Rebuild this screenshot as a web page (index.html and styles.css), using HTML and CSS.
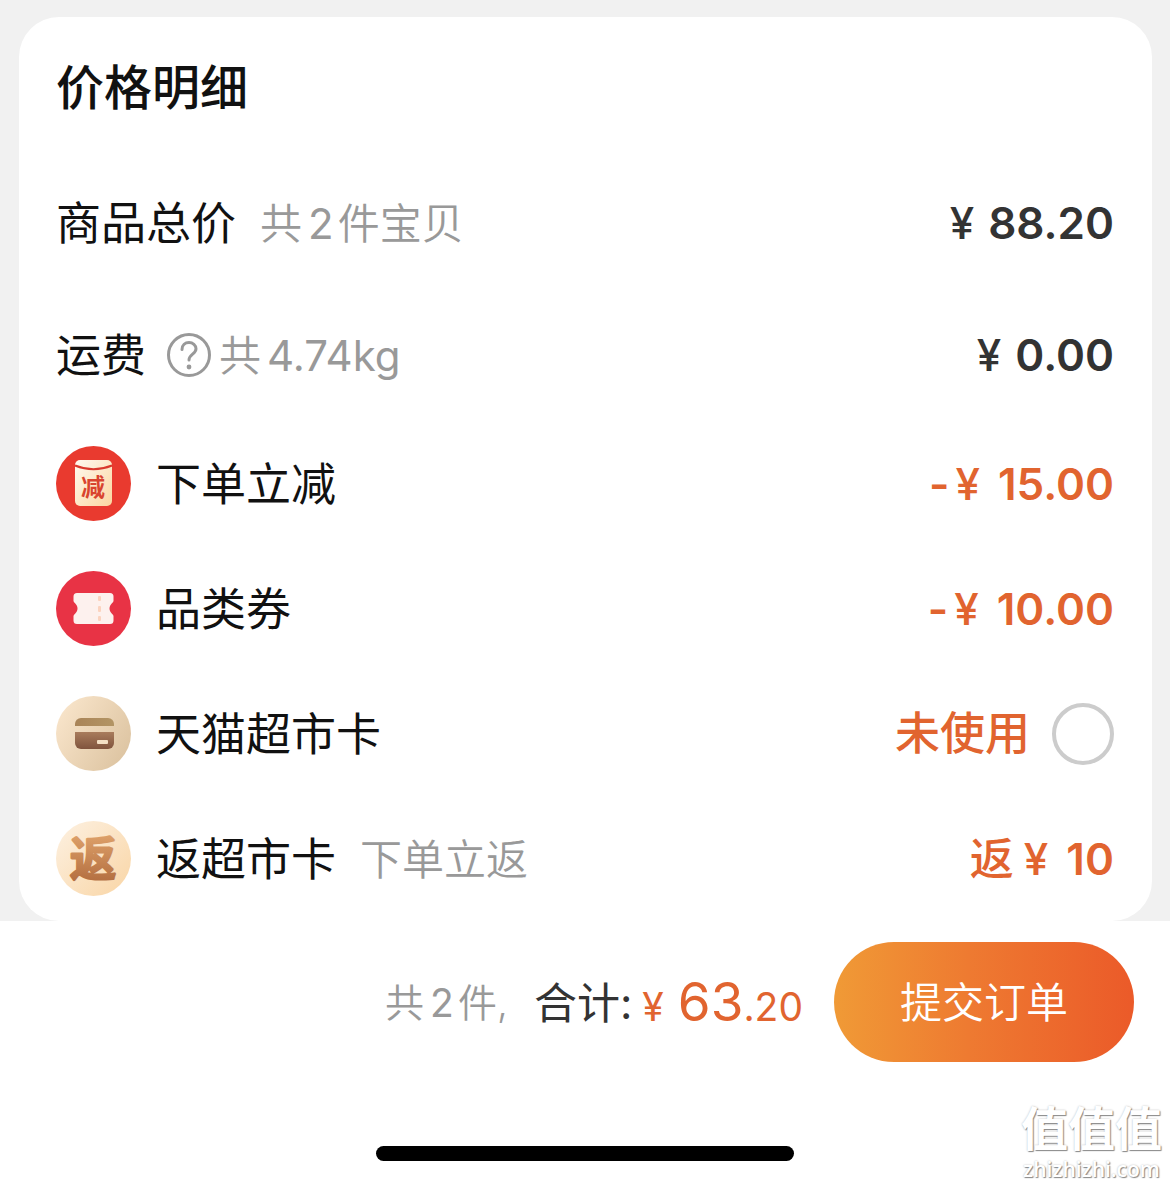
FILE: index.html
```html
<!DOCTYPE html>
<html lang="zh-CN">
<head>
<meta charset="utf-8">
<meta name="viewport" content="width=device-width, initial-scale=1">
<title>确认订单</title>
<link rel="stylesheet" href="styles.css">
</head>
<body>
<main class="content">
  <section class="card">
    <h1 class="card-title">价格明细</h1>
    <ul class="rows">
      <li class="row row-tall">
        <span class="label">商品总价</span>
        <span class="note note-wide">共<span class="num">2</span>件宝贝</span>
        <span class="price"><span class="sign">¥</span><span>88.20</span></span>
      </li>
      <li class="row row-tall">
        <span class="label">运费</span>
        <span class="shipping">
          <button class="help" type="button" aria-label="运费说明">
            <svg viewBox="0 0 44 44" width="44" height="44" fill="none" stroke="currentColor" stroke-width="3" stroke-linecap="round">
              <circle cx="22" cy="22" r="20.5"/>
              <path d="M15 16.5c0-4.5 3.2-7 7-7s7 2.6 7 6.3c0 5.4-7 5.4-7 11.2"/>
              <circle cx="22" cy="34" r="2.4" fill="currentColor" stroke="none"/>
            </svg>
          </button>
          <span class="note">共<span class="num">4.74kg</span></span>
        </span>
        <span class="price"><span class="sign">¥</span><span>0.00</span></span>
      </li>
      <li class="row">
        <svg class="icon" viewBox="0 0 75 75" aria-hidden="true">
          <defs>
            <linearGradient id="envelope" x1="0" y1="0" x2="1" y2="1">
              <stop offset="0" stop-color="#fffaf0"/><stop offset="1" stop-color="#fbd6a0"/>
            </linearGradient>
          </defs>
          <circle cx="37.5" cy="37.5" r="37.5" fill="#e93a2f"/>
          <rect x="19" y="14" width="37" height="46" rx="5" fill="url(#envelope)"/>
          <path d="M19 19.5Q37.5 27 56 19.5" fill="none" stroke="#d9382c" stroke-width="2"/>
          <text class="glyph glyph-cut" x="37" y="50" text-anchor="middle">减</text>
        </svg>
        <span class="label">下单立减</span>
        <span class="price price-off"><span class="minus">-</span><span class="sign">¥</span><span>15.00</span></span>
      </li>
      <li class="row">
        <svg class="icon" viewBox="0 0 75 75" aria-hidden="true">
          <circle cx="37.5" cy="37.5" r="37.5" fill="#e83345"/>
          <path d="M21 22H54a3.500 3.500 0 0 1 3.500 3.500V30c0 1.500-4 3.500-4 7.500s4 6 4 7.500v4.500a3.500 3.500 0 0 1-3.500 3.500H21a3.500 3.500 0 0 1-3.500-3.500V45c0-1.500 4-3.500 4-7.500s-4-6-4-7.500v-4.500A3.500 3.500 0 0 1 21 22z" fill="#fdf1ee"/>
          <g fill="#fbd3bf"><rect x="42" y="25" width="3" height="5" rx="1"/><rect x="42" y="35" width="3" height="6" rx="1"/><rect x="42" y="45" width="3" height="5" rx="1"/></g>
        </svg>
        <span class="label">品类券</span>
        <span class="price price-off"><span class="minus">-</span><span class="sign">¥</span><span>10.00</span></span>
      </li>
      <li class="row">
        <svg class="icon" viewBox="0 0 75 75" aria-hidden="true">
          <defs>
            <linearGradient id="sand" x1="0" y1="0.2" x2="1" y2="0.8">
              <stop offset="0" stop-color="#f9e5cb"/><stop offset="1" stop-color="#dcc3a0"/>
            </linearGradient>
            <linearGradient id="card-top" x1="0" y1="0" x2="1" y2="0">
              <stop offset="0" stop-color="#a98458"/><stop offset="1" stop-color="#b39565"/>
            </linearGradient>
            <linearGradient id="card-base" x1="0" y1="0" x2="0" y2="1">
              <stop offset="0" stop-color="#a97c5c"/><stop offset="1" stop-color="#80543d"/>
            </linearGradient>
          </defs>
          <circle cx="37.5" cy="37.5" r="37.5" fill="url(#sand)"/>
          <path d="M19 30v-2a6 6 0 0 1 6-6H52a6 6 0 0 1 6 6v2z" fill="url(#card-top)"/>
          <path d="M19 36H58V47a6 6 0 0 1-6 6H25a6 6 0 0 1-6-6z" fill="url(#card-base)"/>
          <rect x="41" y="44" width="11" height="4" rx="1" fill="#f3dfc4"/>
        </svg>
        <label class="label" for="market-card">天猫超市卡</label>
        <span class="price price-off choice"><span>未使用</span><input class="radio" id="market-card" type="checkbox"></span>
      </li>
      <li class="row">
        <svg class="icon" viewBox="0 0 75 75" aria-hidden="true">
          <defs>
            <linearGradient id="cream" x1="0" y1="0" x2="1" y2="1">
              <stop offset="0" stop-color="#fdf1e2"/><stop offset="1" stop-color="#f9d5a5"/>
            </linearGradient>
            <linearGradient id="bronze" x1="0" y1="0" x2="0" y2="1">
              <stop offset="0.2" stop-color="#dda069"/><stop offset="1" stop-color="#ae683b"/>
            </linearGradient>
          </defs>
          <circle cx="37.5" cy="37.5" r="37.5" fill="url(#cream)"/>
          <text class="glyph glyph-back" x="37" y="54" text-anchor="middle" fill="url(#bronze)" stroke="url(#bronze)">返</text>
        </svg>
        <span class="label">返超市卡</span>
        <span class="note note-wide">下单立返</span>
        <span class="price price-off"><span class="back">返</span><span class="sign">¥</span><span>10</span></span>
      </li>
    </ul>
  </section>
</main>
<footer class="footer">
  <div class="checkout">
    <span class="count">共<span class="num">2</span>件,</span>
    <span class="total-label">合计:</span>
    <span class="total"><span class="yen">¥</span><span class="whole">63</span>.20</span>
    <button class="submit" type="button">提交订单</button>
  </div>
  <div class="home-bar"></div>
  <div class="watermark" aria-hidden="true">
    <span class="mark-name">值值值</span>
    <span class="mark-site">zhizhizhi.com</span>
  </div>
</footer>
</body>
</html>
```
FILE: styles.css
```css
* {
  box-sizing: border-box;
}

body {
  margin: 0;
  min-height: 100vh;
  display: flex;
  flex-direction: column;
  background: #fff;
  color: #111;
  font-family: Inter, "Noto Sans CJK SC", sans-serif;
}

.content {
  padding: 17px 18px 0 19px;
  background: #f1f1f1;
}

.card {
  padding: 0 38px 0 37px;
  border-radius: 40px;
  background: #fff;
}

.card-title {
  margin: 0;
  padding-top: 2px;
  font-size: 48px;
  font-weight: 500;
  line-height: 138px;
}

.rows {
  margin: 0;
  padding: 0;
  list-style: none;
}

.row {
  display: flex;
  align-items: center;
  height: 125px;
  line-height: 60px;
  white-space: nowrap;
}

.row-tall {
  height: 132px;
}

.icon {
  flex: none;
  width: 75px;
  height: 75px;
  margin-right: 25px;
}

.glyph {
  font-family: "Noto Sans CJK SC", sans-serif;
}

.glyph-cut {
  font-size: 24px;
  font-weight: 700;
  fill: #d9442f;
}

.glyph-back {
  font-size: 46px;
  font-weight: 500;
  stroke-width: 3px;
  stroke-linejoin: round;
}

.label {
  padding-top: 2px;
  font-size: 45px;
}

.note {
  padding-top: 2px;
  color: #999;
  font-size: 42px;
  font-weight: 350;
}

.note-wide {
  margin-left: 24px;
}

.num {
  margin: 0 4px 0 6px;
  font-weight: 400;
}

.shipping {
  display: flex;
  align-items: center;
  gap: 8px;
  margin-left: 21px;
}

.help {
  display: flex;
  padding: 0;
  border: 0;
  background: none;
  color: #999;
}

.price {
  display: flex;
  align-items: center;
  gap: 14px;
  margin-left: auto;
  color: #333;
  font-size: 44px;
  font-weight: 600;
}

.price-off {
  gap: 18px;
  color: #e1642f;
}

.sign {
  font-weight: 500;
}

.minus {
  margin-right: -12px;
}

.back {
  margin-right: -8px;
  font-weight: 500;
}

.choice {
  gap: 22px;
  font-size: 45px;
  font-weight: 500;
}

.radio {
  appearance: none;
  width: 62px;
  height: 62px;
  margin: 0;
  border: 4px solid #ccc;
  border-radius: 50%;
  background: #fff;
}

.radio:checked {
  border-color: #e1642f;
  background: #e1642f;
}

.footer {
  position: relative;
  flex: 1;
  display: flex;
  flex-direction: column;
  align-items: center;
  justify-content: space-between;
  gap: 40px;
  padding: 21px 36px 24px;
}

.checkout {
  display: flex;
  align-items: center;
  justify-content: flex-end;
  width: 100%;
  line-height: 60px;
  white-space: nowrap;
}

.count {
  margin-right: 26px;
  padding-top: 2px;
  color: #999;
  font-size: 39px;
  font-weight: 350;
}

.total-label {
  margin-right: 10px;
  padding-top: 2px;
  color: #333;
  font-size: 43px;
}

.total {
  padding-top: 4px;
  color: #e1642f;
  font-size: 39px;
}

.yen {
  margin-right: 14px;
}

.whole {
  font-size: 53px;
}

.submit {
  width: 300px;
  height: 120px;
  margin-left: 31px;
  padding: 2px 0 0;
  border: 0;
  border-radius: 60px;
  background: linear-gradient(90deg, #f09a36, #ee7a31 45%, #eb5a29);
  color: #fff;
  font: 350 42px/60px Inter, "Noto Sans CJK SC", sans-serif;
}

.home-bar {
  width: 38%;
  height: 15px;
  border-radius: 8px;
  background: #000;
}

.watermark {
  position: absolute;
  right: 8px;
  bottom: 4px;
  display: flex;
  flex-direction: column;
  align-items: center;
  color: #fff;
  text-shadow: 1px 1px 1px #888, 0 0 2px #bbb;
}

.mark-name {
  font-family: "Liberation Sans", "Noto Sans CJK SC", sans-serif;
  font-size: 47px;
  font-weight: 700;
  line-height: 54px;
}

.mark-site {
  font-family: "Open Sans", sans-serif;
  font-size: 21px;
  font-weight: 600;
  line-height: 24px;
}
```
